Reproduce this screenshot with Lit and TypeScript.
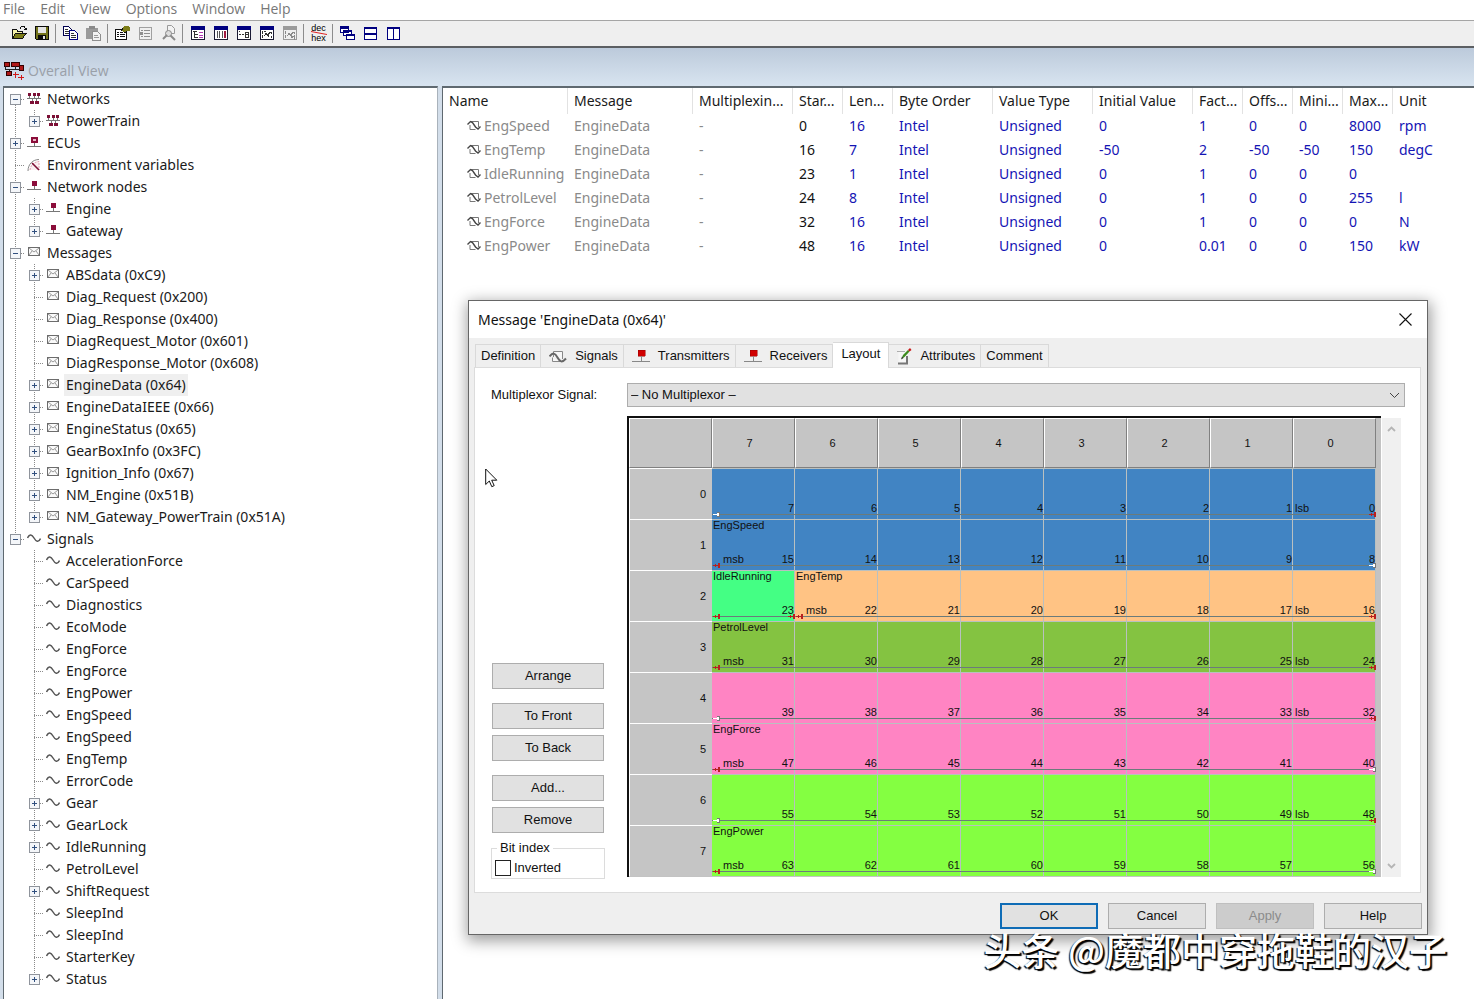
import { LitElement, html, svg, css, nothing, TemplateResult } from "lit";
import { customElement, property, state } from "lit/decorators.js";
import { classMap } from "lit/directives/class-map.js";

/* ---------- icons ---------- */

const icon = (w: number, h: number, body: unknown) => html`<svg
  width=${w}
  height=${h}
  viewBox="0 0 ${w} ${h}"
  shape-rendering="crispEdges"
  aria-hidden="true"
>${body}</svg>`;

const smooth = (w: number, h: number, body: unknown) => html`<svg
  width=${w}
  height=${h}
  viewBox="0 0 ${w} ${h}"
  aria-hidden="true"
>${body}</svg>`;

const treeIcons: Record<string, TemplateResult> = {
  net: icon(14, 14, svg`
    <path d="M1 1h3v3h-3zM6 1h3v3h-3zM10 1h3v3h-3zM3 9h4v3h-4zM8 9h4v3h-4z" fill="#7c0f35"/>
    <path d="M0 6.500h14M2.500 4v2M7.500 4v2M11.500 4v2M5 7v2M9.500 7v2" stroke="#777" fill="none"/>`),
  ecu: icon(14, 14, svg`
    <path d="M4 1h7v6h-7z" fill="#8b0d3a"/><path d="M6 3h3v2h-3z" fill="#e7b9c8"/>
    <path d="M7.500 7v3M0 10.500h14" stroke="#777"/>`),
  node: icon(14, 14, svg`
    <path d="M5 1h5v5h-5z" fill="#8b0d3a"/>
    <path d="M7.500 6v3M0 9.500h14" stroke="#777"/>`),
  env: smooth(14, 14, svg`
    <path d="M1 13C1 6 6 1.500 12 1.500" stroke="#888" fill="none"/>
    <path d="M3 12C3.500 7 7 4 12 3.500V12" stroke="#e5a5b5" fill="#fbeef1" stroke-dasharray="2 1"/>
    <path d="M5 5L12 12" stroke="#7c0f35" stroke-width="1.600"/>`),
  msg: icon(14, 14, svg`
    <path d="M1.500 1.500h11v8h-11z" fill="#fafafa" stroke="#6c6c6c"/>
    <path d="M2 2L7 6L12 2M2 9L5 5M12 9L9 5" stroke="#808080" fill="none" shape-rendering="auto" stroke-width=".8"/>`),
  sig: smooth(14, 14, svg`
    <path d="M.5 6C2.500 1.500 5 2.500 7 6S11.500 11 13.500 6.500" stroke="#555" stroke-width="1.500" fill="none"/>`),
};

const rowSignalIcon = smooth(14, 12, svg`
  <path d="M3 5V9.500H8.500M4 1.500H11.500V7" stroke="#777" fill="none"/>
  <path d="M.5 4.500L3.500 1.500L5.500 2.500L8.500 7L11 9L13.500 6.500" stroke="#444" stroke-width="1.400" fill="none"/>`);

const win = (body: unknown, on = true) => {
  const c = on ? "#000080" : "#9b9b9b";
  return icon(14, 14, svg`
    <path d="M.5.5h13v13h-13z" fill=${on ? "#fff" : "#efefef"} stroke=${on ? "#1b1b33" : "#9b9b9b"}/>
    <path d="M0 0h14v4h-14z" fill=${c}/>${body}`);
};

const toolbar: Array<{ label: string; art: TemplateResult; off?: boolean } | null> = [
  { label: "Open", art: icon(16, 14, svg`
    <path d="M1.500 12V3.500h4l1 1.500h5v3" fill="#f6f3a8" stroke="#111"/>
    <path d="M1.500 12.500L4.500 7.500H15L11.500 12.500z" fill="#7d7d18" stroke="#111"/>
    <path d="M9 2.500L10.500.5H13L14.500 3M12.500 3.500h2.500v-2" stroke="#111" fill="none"/>`) },
  { label: "Save", art: icon(14, 14, svg`
    <path d="M.5.5h13v13H1.500l-1-1z" fill="#74741c" stroke="#0a0a0a"/>
    <path d="M3 1h8v6h-8z" fill="#e4e4e4"/><path d="M3 9h8v5h-8z" fill="#0a0a0a"/>
    <path d="M8 10h2v3h-2z" fill="#e4e4e4"/>`) },
  null,
  { label: "Copy", art: icon(16, 14, svg`
    <path d="M.5.5h5l3 3v6h-8z" fill="#fff" stroke="#000050"/>
    <path d="M2 3.500h3M2 5.500h4M2 7.500h4" stroke="#333"/>
    <path d="M6.500 4.500h5l3 3v6h-8z" fill="#fff" stroke="#000080"/>
    <path d="M8 7.500h3M8 9.500h5M8 11.500h5" stroke="#333"/>`) },
  { label: "Paste", off: true, art: icon(16, 15, svg`
    <path d="M0 2h12v11H0z" fill="#9a9a9a"/><path d="M3 0h6v3H3z" fill="#8a8a8a"/>
    <path d="M6.500 5.500h5l3 3v6h-8z" fill="#f2f2f2" stroke="#8e8e8e"/>
    <path d="M8 9.500h4M8 11.500h5" stroke="#9a9a9a"/>`) },
  null,
  { label: "Properties", art: icon(15, 14, svg`
    <path d="M.5 3.500h11v10H.5z" fill="#fff" stroke="#111"/>
    <path d="M2 6.500h2M2 8.500h2M2 10.500h2M5 8.500h5M5 10.500h5M5 6.500h3" stroke="#111"/>
    <path d="M9 0h5l1 2v3h-4l-2 2-3-3 1-2z" fill="#7d7d18"/><path d="M6 5l2-3M9 6.500h2" stroke="#111"/>`) },
  { label: "List", off: true, art: icon(13, 13, svg`
    <path d="M.5.5h12v12H.5z" fill="#efefef" stroke="#a0a0a0"/>
    <path d="M5 3.500h6M5 6.500h6M5 9.500h6" stroke="#8e8e8e"/>
    <path d="M2 3h2v1H2zM1 5h3v3H1zM2 9h2v1H2z" fill="#8e8e8e"/>`) },
  { label: "Find", off: true, art: smooth(14, 16, svg`
    <path d="M5.500.5h4l3 3v5h-7z" fill="#f2f2f2" stroke="#999"/>
    <circle cx="6.500" cy="8.500" r="3" fill="#dcdcdc" stroke="#8a8a8a"/>
    <path d="M5 10L1 14M8.500 10.500L13 15" stroke="#8a8a8a" stroke-width="2"/>`) },
  null,
  { label: "Tree view", art: win(svg`<path d="M2 5.500h4M3.500 6v6M4 8.500h3M4 11.500h3" stroke="#333"/>
    <path d="M8 6.500h4M8 9.500h4M8 11.500h4" stroke="#b13ab1"/>`) },
  { label: "Column view", art: win(svg`<path d="M3.500 5v7M5.500 5v7M8.500 5v7" stroke="#555"/><path d="M11 5v7" stroke="#a01840" stroke-width="2"/>`) },
  { label: "Detail view", art: win(svg`<path d="M2 8.500h2M5 8.500h2M2 5.500h1" stroke="#333"/><path d="M8.500 6.500h3v5h-3zM8 8.500h4" fill="none" stroke="#333"/>`) },
  { label: "Graph view", art: win(svg`<path d="M2.500 5v3M2.500 9v3M4 5.500h2M11.500 6v2M11.500 10v2" stroke="#333"/>
    <path d="M4 10L6 7.500L9 10.500M8 8.500L10.500 6" stroke="#333" fill="none"/>`) },
  { label: "Graph options", off: true, art: win(svg`<path d="M2.500 5v3M2.500 9v3M11.500 6v2" stroke="#8a8a8a"/>
    <path d="M4 10L6 7.500L9 10.500M8 8.500L10.500 6M8 12L11 10V14" stroke="#8a8a8a" fill="none"/>`, false) },
  null,
  { label: "Decimal or hexadecimal", art: html`<span class="radix"><span>dec</span><span>hex</span>
    ${smooth(16, 4, svg`<path d="M0 .5L16 3.500" stroke="#d22" stroke-width="1"/>`)}</span>` },
  null,
  { label: "Cascade", art: icon(15, 14, svg`
    <path d="M.5.5h8v6h-8zM3.500 4.500h8v5h-8zM6.500 8.500h8v5h-8z" fill="#fff" stroke="#000080"/>
    <path d="M0 0h9v3H0zM3 4h9v2H3zM6 8h9v2H6z" fill="#000080"/>`) },
  { label: "Tile horizontally", art: icon(13, 13, svg`
    <path d="M.5.5h12v12H.5zM0 6.500h13" fill="#fff" stroke="#000080"/>
    <path d="M0 0h13v2H0zM0 6h13v2H0z" fill="#000080"/>`) },
  { label: "Tile vertically", art: icon(13, 13, svg`
    <path d="M.5.5h12v12H.5zM6.500 0v13" fill="#fff" stroke="#000080"/>
    <path d="M0 0h13v2H0z" fill="#000080"/>`) },
];

const appIcon = icon(20, 18, svg`
  <path d="M0 0h5v4H0zM7 0h8v4H7zM15 3h4v5h-4zM2 9h5v4H2z" fill="#b01818" stroke="#300"/>
  <path d="M1.500 4v3.500h14M11.500 4v3M5 7v2" stroke="#222" fill="none"/>
  <path d="M9 12.500h6M11.500 10v6M14 15.500h6M17.500 13v5" stroke="#d01818"/>`);

const redNode = icon(18, 12, svg`
  <path d="M6 0h7v6H6z" fill="#d00000" stroke="#900" stroke-width=".5"/>
  <path d="M9.500 6v5M0 11.500h18" stroke="#888"/>`);
const tabSignal = smooth(18, 13, svg`
  <path d="M4.500 7V1.500H13.500V9M3.500 7.500V11.500H12" stroke="#888" fill="#f7f7f7"/>
  <path d="M.5 6.500C4 2 6 3 8.500 7.500S13 13 17 8.500" stroke="#666" stroke-width="2" fill="none"/>`);
const tabPencil = smooth(15, 17, svg`
  <path d="M1.500 2.500H9.500V15.500H1.500z" fill="#f6f6f6"/>
  <path d="M.5 3.500H8" stroke="#666" stroke-dasharray="1 1"/>
  <path d="M10 8V15.500H1" stroke="#777" stroke-width="2" fill="none"/>
  <path d="M4.500 11L6 7L11 2L12.500 3.500L7.500 9z" fill="#3d8b1d"/>
  <path d="M11 2L13 0L14.500 2L12.500 3.500z" fill="#c81818"/>
  <path d="M4 11.500L6.500 10L5 8.500z" fill="#333"/>`);

/* ---------- data ---------- */

type Item = { text: string; art: string; open?: boolean; kids?: Item[]; more?: boolean };
const msg = (text: string, more = true): Item => ({ text, art: "msg", more });
const sig = (text: string, more = false): Item => ({ text, art: "sig", more });

const tree: Item[] = [
  { text: "Networks", art: "net", more: true, kids: [{ text: "PowerTrain", art: "net", more: true }] },
  { text: "ECUs", art: "ecu", more: true },
  { text: "Environment variables", art: "env" },
  { text: "Network nodes", art: "node", more: true, kids: [
    { text: "Engine", art: "node", more: true }, { text: "Gateway", art: "node", more: true }] },
  { text: "Messages", art: "msg", more: true, kids: [
    msg("ABSdata (0xC9)"), msg("Diag_Request (0x200)", false), msg("Diag_Response (0x400)", false),
    msg("DiagRequest_Motor (0x601)", false), msg("DiagResponse_Motor (0x608)", false),
    msg("EngineData (0x64)"), msg("EngineDataIEEE (0x66)"), msg("EngineStatus (0x65)"),
    msg("GearBoxInfo (0x3FC)"), msg("Ignition_Info (0x67)"), msg("NM_Engine (0x51B)"),
    msg("NM_Gateway_PowerTrain (0x51A)")] },
  { text: "Signals", art: "sig", more: true, kids: [
    sig("AccelerationForce"), sig("CarSpeed"), sig("Diagnostics"), sig("EcoMode"), sig("EngForce"),
    sig("EngForce"), sig("EngPower"), sig("EngSpeed"), sig("EngSpeed"), sig("EngTemp"),
    sig("ErrorCode"), sig("Gear", true), sig("GearLock", true), sig("IdleRunning", true),
    sig("PetrolLevel"), sig("ShiftRequest", true), sig("SleepInd"), sig("SleepInd"),
    sig("StarterKey"), sig("Status", true)] },
];

const heads = ["Name", "Message", "Multiplexin...", "Star...", "Len...", "Byte Order", "Value Type",
  "Initial Value", "Fact...", "Offs...", "Mini...", "Max...", "Unit"];
const rows = [
  ["EngSpeed", "0", "16", "0", "1", "0", "0", "8000", "rpm"],
  ["EngTemp", "16", "7", "-50", "2", "-50", "-50", "150", "degC"],
  ["IdleRunning", "23", "1", "0", "1", "0", "0", "0", ""],
  ["PetrolLevel", "24", "8", "0", "1", "0", "0", "255", "l"],
  ["EngForce", "32", "16", "0", "1", "0", "0", "0", "N"],
  ["EngPower", "48", "16", "0", "0.01", "0", "0", "150", "kW"],
];

type Signal = { name: string; start: number; end: number; tone: string; msb: number };
const signals: Signal[] = [
  { name: "EngSpeed", start: 0, end: 15, tone: "blue", msb: 15 },
  { name: "EngTemp", start: 16, end: 22, tone: "orange", msb: 22 },
  { name: "IdleRunning", start: 23, end: 23, tone: "mint", msb: -1 },
  { name: "PetrolLevel", start: 24, end: 31, tone: "olive", msb: 31 },
  { name: "EngForce", start: 32, end: 47, tone: "pink", msb: 47 },
  { name: "EngPower", start: 48, end: 63, tone: "lime", msb: 63 },
];

/* ---------- shared styles ---------- */

const controls = css`
  * { box-sizing: border-box; }
  svg { display: block; flex: none; }
  button { font: inherit; color: inherit; padding: 0; margin: 0; border: 0; background: none; }
`;

/* ---------- tree ---------- */

@customElement("object-tree")
export class ObjectTree extends LitElement {
  @state() private selected = "EngineData (0x64)";
  @state() private closed = new Set<string>();

  static styles = [controls, css`
    :host { display: block; font: 14px/22px "Noto Sans", "Open Sans", sans-serif; color: #1a1a1a; }
    ul { list-style: none; margin: 0; padding: 0; }
    .row { display: flex; height: 22px; white-space: nowrap; }
    .art { width: 20px; padding: 4px 0 0 2px; }
    .label { padding: 0 2px; cursor: default; }
    .chosen { background: #efefef; }
  `];

  private toggle(item: Item) {
    const next = new Set(this.closed);
    next.has(item.text) ? next.delete(item.text) : next.add(item.text);
    this.closed = next;
  }

  private joint(item: Item, first: boolean, last: boolean, open: boolean) {
    return icon(19, 22, svg`
      <path d="M9.500 ${first ? 11 : 0}V${last ? 11 : 22}M9 11.500H19" stroke="#8a8a8a" stroke-dasharray="1 1" fill="none"/>
      ${item.more ? svg`<path d="M4.500 6.500h10v10h-10z" fill="#f4f6f9" stroke="#8f949c"/>
        <path d="M7 11.500h5${open ? "" : "M9.500 9v5"}" stroke="#31507f"/>` : nothing}`);
  }

  private line(item: Item, level: number, first: boolean, last: boolean, parentLast: boolean): TemplateResult {
    const open = !!item.kids && !this.closed.has(item.text);
    const j = this.joint(item, first, last, open);
    return html`<div class="row">
      ${level ? icon(19, 22, parentLast ? nothing
        : svg`<path d="M9.500 0V22" stroke="#8a8a8a" stroke-dasharray="1 1"/>`) : nothing}
      ${item.more ? html`<button aria-label="Toggle ${item.text}" @click=${() => this.toggle(item)}>${j}</button>` : j}
      <span class="art">${treeIcons[item.art]}</span>
      <button class=${classMap({ label: true, chosen: this.selected === item.text })}
        @click=${() => (this.selected = item.text)}>${item.text}</button>
    </div>
    ${open ? html`<ul role="group">${item.kids!.map((k, i) => html`<li role="treeitem">
      ${this.line(k, 1, false, i === item.kids!.length - 1, last)}</li>`)}</ul>` : nothing}`;
  }

  render() {
    return html`<ul role="tree">${tree.map((t, i) => html`<li role="treeitem">
      ${this.line(t, 0, i === 0, i === tree.length - 1, false)}</li>`)}</ul>`;
  }
}

/* ---------- signal list ---------- */

@customElement("signal-list")
export class SignalList extends LitElement {
  static styles = [controls, css`
    :host { display: block; font: 14px/24px "Noto Sans", "Open Sans", sans-serif; }
    table { width: 100%; table-layout: fixed; border-spacing: 0; white-space: nowrap; }
    .w125 { width: 125px; }
    .w100 { width: 100px; }
    .w50 { width: 50px; }
    th { font-weight: 400; text-align: left; color: #1a1a1a; padding: 0 0 0 6px; height: 26px; border-right: 1px solid #e2e2e2; }
    th:last-child { border: 0; }
    td { padding: 0 0 0 6px; height: 24px; color: #1414b4; }
    .dim { color: #8a8a8a; }
    .dark { color: #111; }
    .name { display: flex; align-items: center; gap: 3px; padding-left: 18px; }
  `];

  render() {
    const widths = ["w125", "w125", "w100", "w50", "w50", "w100", "w100", "w100", "w50", "w50", "w50", "w50", ""];
    return html`<table>
      <colgroup>${widths.map((w) => html`<col class=${w} />`)}</colgroup>
      <thead><tr>${heads.map((h) => html`<th scope="col">${h}</th>`)}</tr></thead>
      <tbody>${rows.map(([name, start, len, ...rest]) => html`<tr>
        <td class="dim"><span class="name">${rowSignalIcon}${name}</span></td>
        <td class="dim">EngineData</td><td class="dim">-</td>
        <td class="dark">${start}</td><td>${len}</td><td>Intel</td><td>Unsigned</td>
        ${rest.map((v) => html`<td>${v}</td>`)}
      </tr>`)}</tbody>
    </table>`;
  }
}

/* ---------- bit layout ---------- */

@customElement("bit-layout")
export class BitLayout extends LitElement {
  @property({ type: Boolean }) inverted = false;

  static styles = [controls, css`
    :host { display: flex; font: 11px/12px "Liberation Sans", Arial, sans-serif; color: #111; }
    .frame { flex: 1; border: solid #111; border-width: 2px 0 0 2px; background: #c3c3c3; padding-right: 5px; }
    table { width: 100%; table-layout: fixed; border-spacing: 0; }
    th { font-weight: 400; padding: 0; background: #c5c5c5; }
    thead th { height: 50px; border: 1px solid; border-color: #fff #808080 #808080 #fff; padding-right: 8px; }
    tbody th { height: 51px; text-align: right; padding-right: 6px; border-top: 1px solid #fff; border-left: 1px solid #fff; }
    td { padding: 0; height: 51px; border-top: 1px solid #b9c0c0; border-right: 1px solid #b9c0c0; }
    .bit { position: relative; height: 50px; display: grid; grid-template-rows: 12px 1fr 12px 5px; padding-left: 1px; }
    .name { white-space: nowrap; line-height: 10px; }
    .foot { grid-row: 3; display: flex; justify-content: space-between; }
    .msb { padding-left: 10px; }
    .lsb { padding-left: 1px; }
    .rail { grid-row: 4; border-top: 1px solid #6b7b7b; margin-left: -1px; margin-right: -1px; }
    .mark { position: absolute; bottom: 2px; left: 1px; }
    .end { left: auto; right: -1px; }
    .blue { background: #4184c3; }
    .orange { background: #ffc384; }
    .mint { background: #44ff84; }
    .olive { background: #84c341; }
    .pink { background: #ff84c3; }
    .lime { background: #84ff41; }
    .bar { width: 19px; margin: 2px 0 0 1px; background: #f0f0f0; display: flex; flex-direction: column; justify-content: space-between; align-items: center; padding: 7px 0; }
  `];

  private mark(own: boolean, end: boolean) {
    return html`<span class=${classMap({ mark: true, end })}>${icon(7, 5, own
      ? svg`<path d="M0 2h5v1H0zM2 1h1v3H2zM5 0h2v5H5z" fill="#b82020"/>`
      : svg`<path d="M4 0h3v5H4z" fill="#777"/><path d="M0 2h5v1H0zM4 1h2v3H4z" fill="#fff"/>`)}</span>`;
  }

  private cell(r: number, c: number) {
    const n = r * 8 + (7 - c);
    const s = signals.find((x) => n >= x.start && n <= x.end)!;
    const first = c === 0 || n === s.end;
    const last = c === 7 || n === s.start;
    return html`<td class=${s.tone}><div class="bit">
      ${n === s.end ? html`<span class="name">${s.name}</span>` : nothing}
      <div class="foot">
        <span class=${n === s.msb ? "msb" : "lsb"}>${n === s.msb ? "msb" : n === s.start && n !== s.end ? "lsb" : ""}</span>
        <span>${n}</span>
      </div>
      <div class="rail"></div>
      ${first ? this.mark(n === s.end, false) : nothing}
      ${last ? this.mark(n === s.start, true) : nothing}
    </div></td>`;
  }

  render() {
    const idx = [0, 1, 2, 3, 4, 5, 6, 7];
    return html`<div class="frame"><table>
        <thead><tr><th></th>${idx.map((c) => html`<th scope="col">${7 - c}</th>`)}</tr></thead>
        <tbody>${idx.map((r) => html`<tr><th scope="row">${r}</th>${idx.map((c) => this.cell(r, c))}</tr>`)}</tbody>
      </table></div>
      <div class="bar">
        ${smooth(9, 8, svg`<path d="M1 6L4.500 2.500L8 6" stroke="#b5b5b5" stroke-width="1.800" fill="none"/>`)}
        ${smooth(9, 8, svg`<path d="M1 2L4.500 5.500L8 2" stroke="#b5b5b5" stroke-width="1.800" fill="none"/>`)}
      </div>`;
  }
}

/* ---------- message dialog ---------- */

@customElement("message-dialog")
export class MessageDialog extends LitElement {
  @state() private tab = "Layout";

  static styles = [controls, css`
    :host { display: block; border: 1px solid #666; background: #efefef; box-shadow: 1px 4px 14px 2px rgba(0, 0, 0, .38); font: 13px/16px "Liberation Sans", Arial, sans-serif; color: #111; }
    header { display: flex; align-items: center; justify-content: space-between; height: 37px; background: #fff; padding: 0 12px 0 9px; }
    h2 { margin: 0; font: 14px/20px "Noto Sans", "Open Sans", sans-serif; }
    .close { padding: 3px; }
    .tabs { display: flex; align-items: flex-end; padding: 4px 0 0 6px; height: 29px; }
    .tab { display: flex; align-items: center; gap: 8px; height: 23px; padding: 0 5px; border: solid #d9d9d9; border-width: 1px 1px 0 0; }
    .tab:first-child { border-left-width: 1px; }
    .tab.art { padding-left: 8px; }
    .tab.on { height: 26px; padding: 0 8px 3px; background: #fff; margin-bottom: -1px; z-index: 1; }
    .panel { margin: 0 6px 0 5px; background: #fff; border: 1px solid #dcdcdc; padding: 15px 15px 13px 16px; display: grid; grid-template-columns: 114px 1fr; column-gap: 22px; row-gap: 9px; grid-template-rows: 24px auto; }
    .caption { line-height: 24px; white-space: nowrap; }
    .pick { position: relative; display: flex; }
    select { appearance: none; width: 100%; height: 24px; font: inherit; color: inherit; background: #e1e1e1; border: 1px solid #adadad; border-radius: 0; padding: 0 3px; }
    .pick svg { position: absolute; right: 5px; top: 9px; pointer-events: none; }
    .side { display: flex; flex-direction: column; justify-content: flex-end; }
    .push { height: 26px; background: #e1e1e1; border: 1px solid #adadad; margin: 0 1px 6px; }
    .gap { margin-bottom: 14px; }
    fieldset { margin: 2px 0 0; border: 1px solid #dcdcdc; padding: 0 3px 2px; min-width: 0; height: 38px; }
    legend { padding: 0 3px; margin-left: 2px; line-height: 14px; }
    .check { display: flex; align-items: center; gap: 3px; line-height: 16px; padding-top: 5px; }
    .check input { appearance: none; width: 16px; height: 16px; margin: 0; border: 1px solid #222; background: #fff; }
    .check input:checked { background: #1a6fb5; }
    bit-layout { margin: 0 4px 2px 0; padding-bottom: 0; min-height: 461px; }
    footer { display: flex; justify-content: flex-end; gap: 10px; padding: 10px 5px 5px; }
    footer .push { width: 98px; margin: 0; }
    .main { border: 2px solid #0f6cb6; }
    .push:disabled { background: #cccccc; border-color: #bfbfbf; color: #8b8b8b; }
  `];

  render() {
    const tabs: Array<[string, TemplateResult?]> = [["Definition"], ["Signals", tabSignal],
      ["Transmitters", redNode], ["Receivers", redNode], ["Layout"], ["Attributes", tabPencil], ["Comment"]];
    return html`
      <header>
        <h2>Message 'EngineData (0x64)'</h2>
        <button class="close" aria-label="Close">${smooth(13, 13, svg`<path d="M.5.5L12.500 12.500M12.500.5L.5 12.500" stroke="#111" stroke-width="1.100"/>`)}</button>
      </header>
      <div class="tabs" role="tablist">${tabs.map(([t, art]) => html`<button role="tab"
        class=${classMap({ tab: true, on: this.tab === t, art: !!art })}
        aria-selected=${this.tab === t} @click=${() => (this.tab = t)}>${art ?? nothing}<span>${t}</span></button>`)}</div>
      <div class="panel" role="tabpanel">
        <label class="caption" for="mux">Multiplexor Signal:</label>
        <div class="pick"><select id="mux"><option>– No Multiplexor –</option></select>
          ${smooth(11, 7, svg`<path d="M1 1L5.500 5.500L10 1" stroke="#444" fill="none"/>`)}</div>
        <div class="side">
          <button class="push gap">Arrange</button>
          <button class="push">To Front</button>
          <button class="push gap">To Back</button>
          <button class="push">Add...</button>
          <button class="push">Remove</button>
          <fieldset><legend>Bit index</legend>
            <label class="check"><input type="checkbox" />Inverted</label>
          </fieldset>
        </div>
        <bit-layout></bit-layout>
      </div>
      <footer>
        <button class="push main">OK</button>
        <button class="push">Cancel</button>
        <button class="push" disabled>Apply</button>
        <button class="push">Help</button>
      </footer>`;
  }
}

/* ---------- application ---------- */

@customElement("app-root")
export class AppRoot extends LitElement {
  static styles = [controls, css`
    :host { position: relative; display: flex; flex-direction: column; height: 100vh; overflow: hidden; background: #fff; font: 14px/18px "Open Sans", "Noto Sans", sans-serif; color: #1a1a1a; }
    .menu { display: flex; align-items: flex-start; gap: 15px; height: 20px; padding: 0 3px; color: #777; flex: none; }
    .tools { display: flex; align-items: center; height: 28px; flex: none; padding: 0 0 1px 7px; background: #efefef; border-top: 1px solid #a5a5a5; border-bottom: 2px solid #5c5f63; }
    .tool { width: 23px; height: 23px; display: grid; place-items: center; }
    .split { width: 6px; height: 19px; background: linear-gradient(90deg, transparent 2px, #8c8c8c 2px, #8c8c8c 3px, transparent 3px); }
    .radix { position: relative; display: flex; flex-direction: column; font: 9px/10px "Liberation Sans", Arial, sans-serif; color: #000; }
    .radix svg { position: absolute; left: 0; top: 8px; }
    .desk { flex: 1; min-height: 0; display: flex; flex-direction: column; background: linear-gradient(#bccadb, #d8e4f0 38px, #d3deea 39px); }
    .title { display: flex; align-items: center; gap: 4px; height: 38px; padding: 7px 0 0 4px; color: #9aa0a8; flex: none; }
    .panes { flex: 1; min-height: 0; display: grid; grid-template-columns: 435px 1fr; column-gap: 4px; padding-left: 3px; }
    .pane { min-width: 0; overflow: hidden; background: #fff; border: solid #5f6970; border-width: 2px 0 0 1px; }
    .pane:first-child { border-right: 1px solid #a9b2bb; padding-left: 2px; }
    message-dialog { position: absolute; left: 468px; top: 300px; width: 960px; }
    .cursor { position: absolute; left: 485px; top: 468px; }
    .credit { position: absolute; right: 27px; top: 926px; font: 500 38px/46px "Noto Sans CJK SC", sans-serif; color: #fff; white-space: nowrap; text-shadow: 2px 2px 1px #000, -1px 1px 1px #000; }
  `];

  render() {
    return html`
      <nav class="menu">${["File", "Edit", "View", "Options", "Window", "Help"].map((m) => html`<button>${m}</button>`)}</nav>
      <div class="tools" role="toolbar">${toolbar.map((t) => t
        ? html`<button class="tool" aria-label=${t.label} ?disabled=${t.off}>${t.art}</button>`
        : html`<span class="split"></span>`)}</div>
      <div class="desk">
        <div class="title">${appIcon}<span>Overall View</span></div>
        <div class="panes">
          <div class="pane"><object-tree></object-tree></div>
          <div class="pane"><signal-list></signal-list></div>
        </div>
      </div>
      <message-dialog></message-dialog>
      <span class="cursor">${smooth(13, 20, svg`<path d="M.7 1V16.500L4.300 13L6.800 18.700L9.200 17.600L6.700 12.200H11.800z" fill="#fff" stroke="#111"/>`)}</span>
      <span class="credit">头条 @魔都中穿拖鞋的汉子</span>`;
  }
}
